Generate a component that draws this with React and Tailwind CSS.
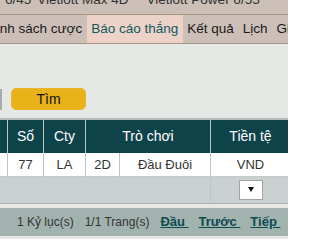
import React from "react";

const TABS = [
  { label: "Danh sách cược", first: true },
  { label: "Báo cáo thắng", active: true },
  { label: "Kết quả" },
  { label: "Lịch" },
  { label: "Giới thiệu" },
];

const cell = "border-l border-[#bcc6c6] flex items-center justify-center";

export default function App() {
  return (
    <div className="w-[288px] h-[239px] overflow-hidden bg-[#e6e8e6] font-['Liberation_Sans',Arial,sans-serif]">
      {/* Game links, scrolled partly out of view */}
      <div className="h-[15px] bg-[#ccbfb7] border-b border-[#a69684] overflow-hidden">
        <div className="-mt-[7px] flex whitespace-nowrap text-[13.5px] leading-[13px] text-[#333]">
          <span className="ml-[5px]">6/45</span>
          <span className="ml-[6px]">Vietlott Max 4D</span>
          <span className="ml-[18px]">Vietlott Power 6/55</span>
        </div>
      </div>

      {/* Menu tabs */}
      <div className="h-[29px] bg-[#ccbfb7] border-b border-[#a69684] flex whitespace-nowrap text-[13.5px] leading-[28px]">
        {TABS.map((t) => (
          <div
            key={t.label}
            className={
              (t.first ? "-ml-[22px] " : "") +
              (t.active ? "bg-[#edd2c8] text-[#0f5b60] " : "text-[#1a1a1a] ") +
              "px-[4.5px] shrink-0"
            }
          >
            {t.label}
          </div>
        ))}
      </div>

      {/* Search row */}
      <div className="pt-[44px] flex items-center">
        <div className="w-[2px] h-[21px] bg-[#a9aaa9]" />
        <button className="ml-[9px] w-[75px] h-[22px] rounded-[5px] border border-[#e9b62a] bg-[#e8b218] text-[14px] text-[#111] leading-none">
          Tìm
        </button>
      </div>

      {/* Result table */}
      <div className="mt-[8px] border-t-2 border-[#b5bbbb]">
        <div className="-ml-[33px] w-[355px] grid grid-cols-[40px_36px_42px_34px_91px_80px]">
          <div className={cell + " h-[33px] bg-[#0f434a]"} />
          <div className={cell + " h-[33px] bg-[#0f434a] text-[14px] text-white"}>Số</div>
          <div className={cell + " h-[33px] bg-[#0f434a] text-[14px] text-white"}>Cty</div>
          <div className={cell + " col-span-2 h-[33px] bg-[#0f434a] text-[14px] text-white"}>Trò chơi</div>
          <div className={cell + " h-[33px] bg-[#0f434a] text-[14px] text-white"}>Tiền tệ</div>

          <div className={cell + " h-[24px] bg-white border-b border-b-[#c3cbcb]"} />
          <div className={cell + " h-[24px] bg-white border-b border-b-[#c3cbcb] text-[13px] text-[#333]"}>77</div>
          <div className={cell + " h-[24px] bg-white border-b border-b-[#c3cbcb] text-[13px] text-[#333]"}>LA</div>
          <div className={cell + " h-[24px] bg-white border-b border-b-[#c3cbcb] text-[13px] text-[#333]"}>2D</div>
          <div className={cell + " h-[24px] bg-white border-b border-b-[#c3cbcb] text-[13px] text-[#333]"}>Đầu Đuôi</div>
          <div className={cell + " h-[24px] bg-white border-b border-b-[#c3cbcb] text-[13px] text-[#333]"}>VND</div>

          <div className="col-span-5 h-[27px] bg-[#c9d0d0] border-b border-[#a9b2b2]" />
          <div className={cell + " h-[27px] bg-[#c9d0d0] border-b border-b-[#a9b2b2] pb-[1px]"}>
            <div className="w-[24px] h-[20px] bg-white border border-[#a3a3a3] flex items-center justify-center">
              <svg width="6" height="5" viewBox="0 0 6 5">
                <polygon points="0,0 6,0 3,5" fill="#111" />
              </svg>
            </div>
          </div>
        </div>
      </div>

      {/* Pager */}
      <div className="mt-[4px] h-[28px] bg-[#a2b2af] flex items-center gap-[11px] pl-[17px] whitespace-nowrap text-[12px] text-[#333]">
        <span>1 Kỷ lục(s)</span>
        <span>1/1 Trang(s)</span>
        <a href="#" className="text-[13px] font-bold text-[#0c4b50] underline whitespace-pre">Đầu </a>
        <a href="#" className="-ml-[1px] text-[13px] font-bold text-[#0c4b50] underline whitespace-pre">Trước </a>
        <a href="#" className="-ml-[1px] text-[13px] font-bold text-[#0c4b50] underline whitespace-pre">Tiếp </a>
      </div>
    </div>
  );
}
